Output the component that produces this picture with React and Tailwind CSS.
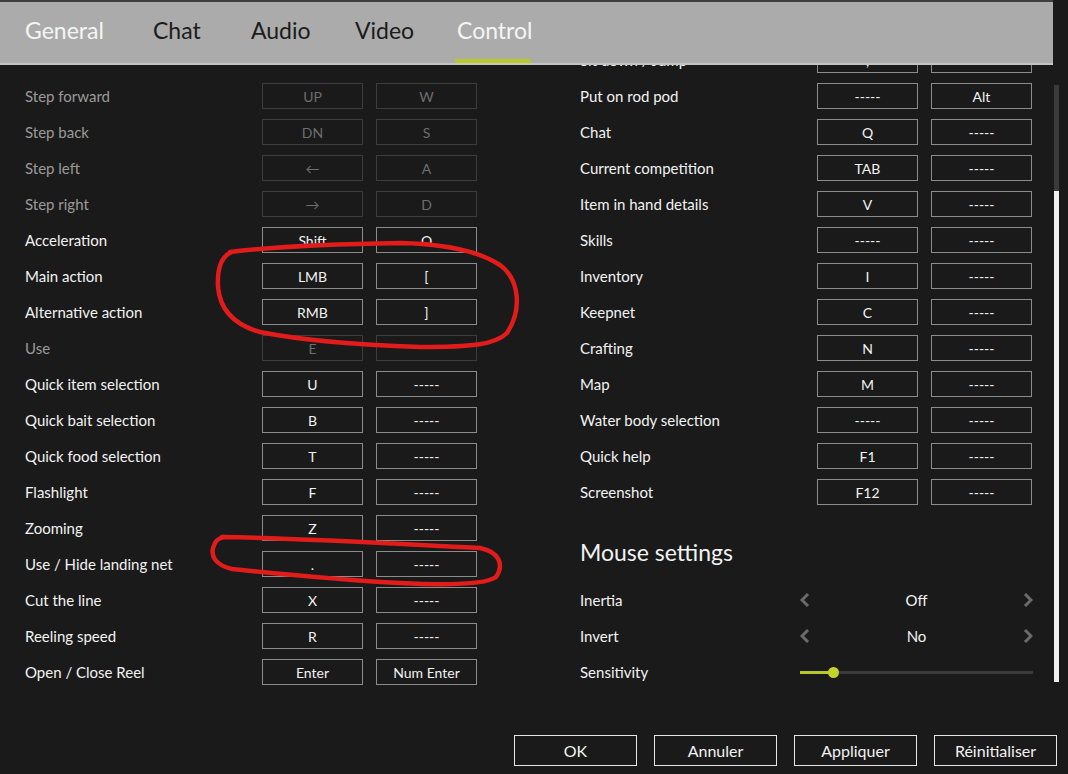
import React from 'react'

const LEFT = [
  { label: 'Step forward', keys: ['UP', 'W'], dim: true },
  { label: 'Step back', keys: ['DN', 'S'], dim: true },
  { label: 'Step left', keys: ['←', 'A'], dim: true },
  { label: 'Step right', keys: ['→', 'D'], dim: true },
  { label: 'Acceleration', keys: ['Shift', 'O'] },
  { label: 'Main action', keys: ['LMB', '['] },
  { label: 'Alternative action', keys: ['RMB', ']'] },
  { label: 'Use', keys: ['E', ''], dim: true },
  { label: 'Quick item selection', keys: ['U', '-----'] },
  { label: 'Quick bait selection', keys: ['B', '-----'] },
  { label: 'Quick food selection', keys: ['T', '-----'] },
  { label: 'Flashlight', keys: ['F', '-----'] },
  { label: 'Zooming', keys: ['Z', '-----'] },
  { label: 'Use / Hide landing net', keys: ['.', '-----'] },
  { label: 'Cut the line', keys: ['X', '-----'] },
  { label: 'Reeling speed', keys: ['R', '-----'] },
  { label: 'Open / Close Reel', keys: ['Enter', 'Num Enter'] },
]

const RIGHT = [
  { label: 'Sit down / Jump', keys: [';', ''] },
  { label: 'Put on rod pod', keys: ['-----', 'Alt'] },
  { label: 'Chat', keys: ['Q', '-----'] },
  { label: 'Current competition', keys: ['TAB', '-----'] },
  { label: 'Item in hand details', keys: ['V', '-----'] },
  { label: 'Skills', keys: ['-----', '-----'] },
  { label: 'Inventory', keys: ['I', '-----'] },
  { label: 'Keepnet', keys: ['C', '-----'] },
  { label: 'Crafting', keys: ['N', '-----'] },
  { label: 'Map', keys: ['M', '-----'] },
  { label: 'Water body selection', keys: ['-----', '-----'] },
  { label: 'Quick help', keys: ['F1', '-----'] },
  { label: 'Screenshot', keys: ['F12', '-----'] },
]

const TABS = [
  { name: 'General', w: 'w-[128px]', light: true },
  { name: 'Chat', w: 'w-[98px]' },
  { name: 'Audio', w: 'w-[104px]' },
  { name: 'Video', w: 'w-[102px]' },
  { name: 'Control', w: 'w-[80px]', light: true, active: true },
]

function Key({ k, dim }) {
  return (
    <div
      className={`w-[101px] h-[26px] border flex items-center justify-center text-[14px] ${
        dim ? 'border-[#3d3d3d] text-[#6e6e6e]' : 'border-[#8c8c8c] text-[#f2f2f2]'
      }`}
    >
      {k}
    </div>
  )
}

function BindRow({ label, keys, dim }) {
  return (
    <div className="flex items-center h-[36px]">
      <div className={`w-[237px] text-[15px] ${dim ? 'text-[#9a9a9a]' : 'text-[#f2f2f2]'}`}>{label}</div>
      <Key k={keys[0]} dim={dim} />
      <div className="ml-[13px]">
        <Key k={keys[1]} dim={dim} />
      </div>
    </div>
  )
}

function Chevron({ dir }) {
  return (
    <svg width="10" height="16" viewBox="0 0 10 16">
      <polyline
        points={dir === 'left' ? '8,2 2,8 8,14' : '2,2 8,8 2,14'}
        fill="none"
        stroke="#6b6b6b"
        strokeWidth="3"
      />
    </svg>
  )
}

function Selector({ label, value }) {
  return (
    <div className="flex items-center h-[36px]">
      <div className="w-[220px] text-[15px] text-[#f2f2f2]">{label}</div>
      <div className="w-[233px] flex items-center justify-between">
        <Chevron dir="left" />
        <span className="text-[15px] text-[#f2f2f2]">{value}</span>
        <Chevron dir="right" />
      </div>
    </div>
  )
}

export default function App() {
  return (
    <div className="relative w-[1068px] h-[774px] bg-[#1a1a1a] overflow-hidden font-['Lato','Noto_Sans',sans-serif]">
      <div className="h-[2px] bg-[#3e3e3e] w-[1053px]" />
      <div className="w-[1053px] h-[63px] bg-[#ababab] border-b-2 border-[#c4c4c4] flex items-end pl-[25px]">
        {TABS.map((t) => (
          <div key={t.name} className={`${t.w} h-full flex flex-col justify-between shrink-0`}>
            <div className={`pt-[12px] text-[23px] leading-[32px] ${t.light ? 'text-[#f5f5f5]' : 'text-[#1c1c1c]'}`}>
              {t.name}
            </div>
            {t.active && <div className="h-[4px] bg-[#b9c727] w-[76px] -ml-[2px]" />}
          </div>
        ))}
      </div>

      <div className="flex h-[635px] overflow-hidden pl-[25px]">
        <div className="w-[452px] mt-[13px] shrink-0">
          {LEFT.map((r) => (
            <BindRow key={r.label} {...r} />
          ))}
        </div>
        <div className="w-[453px] ml-[103px] -mt-[23px] shrink-0">
          {RIGHT.map((r) => (
            <BindRow key={r.label} {...r} />
          ))}
          <div className="h-[72px] pt-[12px] flex items-center text-[23px] text-[#f2f2f2]">Mouse settings</div>
          <Selector label="Inertia" value="Off" />
          <Selector label="Invert" value="No" />
          <div className="flex items-center h-[36px]">
            <div className="w-[220px] text-[15px] text-[#f2f2f2]">Sensitivity</div>
            <div className="relative w-[233px] h-[3px] bg-[#3a3a3a]">
              <div className="h-full w-[33px] bg-[#b9c727]" />
              <div className="absolute left-[28px] -top-[4px] w-[11px] h-[11px] rounded-full bg-[#c4d22a]" />
            </div>
          </div>
        </div>
        <div className="ml-[21px] mt-[20px] w-[5px] flex flex-col shrink-0">
          <div className="h-[106px] bg-[#3a3a3a]" />
          <div className="h-[491px] bg-[#f0f0f0]" />
        </div>
      </div>

      <div className="flex justify-end gap-[17px] pt-[35px] pr-[11px]">
        {['OK', 'Annuler', 'Appliquer', 'Réinitialiser'].map((b) => (
          <div
            key={b}
            className="w-[123px] h-[31px] border border-[#e6e6e6] flex items-center justify-center text-[16px] text-[#f2f2f2]"
          >
            {b}
          </div>
        ))}
      </div>

      <svg className="absolute inset-0 pointer-events-none" width="1068" height="774">
        <path
          d="M230 252 C 280 246, 330 244, 400 243 C 450 244, 480 252, 500 265 C 520 280, 522 310, 507 333 C 495 345, 470 347, 420 347 C 360 345, 300 340, 260 332 C 235 325, 220 310, 218 287 C 217 268, 222 256, 232 252"
          fill="none"
          stroke="#e21b1b"
          strokeWidth="4.5"
          strokeLinecap="round"
        />
        <path
          d="M222 537 C 300 538, 400 544, 480 548 C 500 552, 504 565, 496 577 C 485 585, 440 585, 400 583 C 340 580, 280 574, 232 569 C 215 565, 211 556, 213 548 C 215 541, 218 538, 224 537"
          fill="none"
          stroke="#e21b1b"
          strokeWidth="4.5"
          strokeLinecap="round"
        />
      </svg>
    </div>
  )
}
